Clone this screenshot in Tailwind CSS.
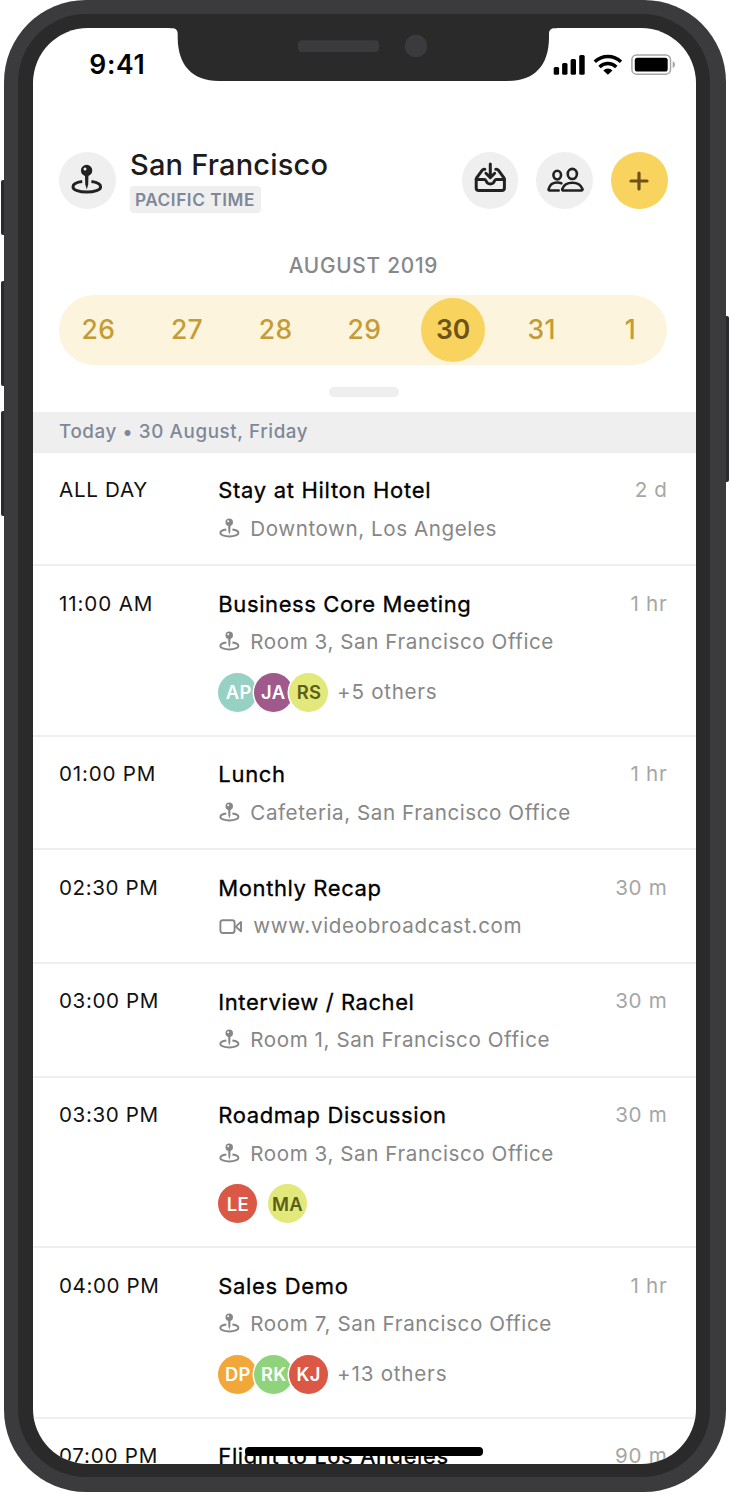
<!DOCTYPE html>
<html lang="en">
<head>
<meta charset="utf-8">
<meta name="viewport" content="width=device-width, initial-scale=1">
<title>Calendar – San Francisco</title>
<script src="https://cdn.jsdelivr.net/npm/@tailwindcss/browser@4"></script>
</head>
<body class="bg-white font-[Inter,'Liberation_Sans',sans-serif] antialiased">

<!-- Shared icons -->
<svg class="hidden" aria-hidden="true">
  <symbol id="pin" viewBox="0 0 32 32">
    <path d="M11.200 17.500C5.600 18.200 2 20.300 2 22.900c0 2.900 6.200 5.200 13.800 5.200s13.800-2.300 13.800-5.200c0-2.600-3.600-4.700-9.200-5.400" fill="none" stroke="currentColor" stroke-width="3"/>
    <path d="M13.900 10h3.600l-.3 10.500-1.400 5-1.500-5z" fill="currentColor"/>
    <path fill-rule="evenodd" d="M15.600.8a5.700 5.700 0 1 1 0 11.400 5.700 5.700 0 0 1 0-11.400zM14 3.400a1.500 1.500 0 1 0 0 3 1.500 1.500 0 0 0 0-3z" fill="currentColor"/>
  </symbol>
  <symbol id="video" viewBox="0 0 24 20">
    <g fill="none" stroke="currentColor" stroke-width="1.900" stroke-linejoin="round">
      <rect x="1.400" y="4.200" width="14.200" height="12.800" rx="2.400"/>
      <path d="M16.800 10.600l5.200-4.700v9.400z"/>
    </g>
  </symbol>
</svg>

<div class="relative w-[732px] h-[1494px] overflow-hidden">
  <!-- Hardware buttons -->
  <div class="absolute left-[0.500px] top-[180px] w-[6px] h-[55px] rounded-l-[2px] bg-[#2b2b2b]"></div>
  <div class="absolute left-[0.500px] top-[281px] w-[6px] h-[105px] rounded-l-[2px] bg-[#2b2b2b]"></div>
  <div class="absolute left-[0.500px] top-[411px] w-[6px] h-[105px] rounded-l-[2px] bg-[#2b2b2b]"></div>
  <div class="absolute left-[723px] top-[316px] w-[6.400px] h-[166px] rounded-r-[2px] bg-[#2b2b2b]"></div>

  <!-- Frame -->
  <div class="relative ml-[4.300px] w-[721.400px] h-[1492.400px] rounded-[82px] bg-[#3b3b3d] pl-[14px] pr-[15.700px] pt-[14px] pb-[15.400px]">
    <div class="h-full rounded-[68px] bg-[#2a2a2a] pl-[14.500px] pr-[14px] pt-[14px] pb-[13px]">
      <main class="h-full rounded-[55px] bg-white overflow-hidden flex flex-col">

        <!-- Status bar -->
        <div class="flex-none h-[119.500px] pt-[22px] pl-[56.500px] pr-[20px] flex items-start justify-between text-black">
          <span class="text-[26.500px] leading-[29px] font-semibold tracking-[0.700px]">9:41</span>
          <svg class="w-[124px] h-[24px] mt-[2px]" viewBox="552 52 124 24">
            <rect x="553.700" y="67" width="5.400" height="7.700" rx="1.500"/>
            <rect x="562.100" y="63" width="5.400" height="11.700" rx="1.500"/>
            <rect x="570.600" y="59" width="5.400" height="15.700" rx="1.500"/>
            <rect x="579.200" y="55" width="5.500" height="19.700" rx="1.500"/>
            <g fill="none" stroke="#000" stroke-width="3.400">
              <path d="M594.800 61.700a19 19 0 0 1 26.200 0"/>
              <path d="M599.500 67a12 12 0 0 1 16.800 0"/>
            </g>
            <path d="M607.900 74.700l-4.600-4.300a6.800 6.800 0 0 1 9.200 0z"/>
            <rect x="631.900" y="54.900" width="38.600" height="19.300" rx="4.800" fill="none" stroke="#a6a6a6" stroke-width="1.500"/>
            <rect x="634.800" y="57.700" width="32.900" height="13.900" rx="2.600"/>
            <path d="M672.700 61.200c3 1 3 5.900 0 6.900z" fill="#a6a6a6"/>
          </svg>
        </div>

        <!-- Header -->
        <header class="flex-none h-[66px] pl-[26.200px] pr-[28.500px] flex items-start">
          <div class="mt-[4.500px] size-[56.600px] rounded-full bg-[#efefef] text-[#222] flex items-center justify-center">
            <svg class="size-[32px] -mt-[0.500px]"><use href="#pin"/></svg>
          </div>
          <div class="ml-[14.400px] flex flex-col items-start">
            <h1 class="text-[29px] leading-[34px] font-medium tracking-[0.200px] text-[#1c1c1c]">San Francisco</h1>
            <span class="mt-[4.500px] h-[27px] rounded-[4px] bg-[#efefef] pl-[5px] pr-[6px] text-[17.200px] leading-[27px] font-semibold tracking-[0.560px] text-[#7f8898]">PACIFIC TIME</span>
          </div>
          <div class="ml-auto mt-[4.500px] flex gap-[18px]">
            <button class="size-[56.600px] rounded-full bg-[#efefef] text-[#222] flex items-center justify-center">
              <svg class="size-[32px] -mt-[5px]" viewBox="0 0 32 32" fill="none" stroke="currentColor" stroke-width="3" stroke-linecap="round" stroke-linejoin="round">
                <path d="M10.800 7.200H10.200Q9 7.200 8.300 8.200L2.800 15.600Q2.200 16.400 2.200 17.400V26a2.600 2.600 0 0 0 2.600 2.600H27.800a2.600 2.600 0 0 0 2.600-2.600V17.400Q30.400 16.400 29.800 15.600L24.300 8.200Q23.600 7.200 22.400 7.200H21.800"/>
                <path d="M2.200 17.600H10.600c1 0 1.300.8 1.800 1.900.7 1.600 2 2.400 3.900 2.400s3.200-.8 3.900-2.400c.5-1.100.8-1.900 1.800-1.900h8.400"/>
                <path d="M16.300 2V15.200M11.900 11.300l4.400 4.300 4.400-4.300"/>
              </svg>
            </button>
            <button class="size-[56.600px] rounded-full bg-[#efefef] text-[#222] flex items-center justify-center">
              <svg class="w-[37px] h-[29.200px] ml-[1px] -mt-[1px]" viewBox="0 0 38 30" fill="none" stroke="currentColor" stroke-width="2.700" stroke-linecap="round" stroke-linejoin="round">
                <ellipse cx="10.500" cy="10.400" rx="3.900" ry="4.500"/>
                <ellipse cx="26" cy="9.200" rx="4.700" ry="5.200"/>
                <path d="M12 26.200H2.800c-1 0-1.400-.7-1.100-1.600C2.700 20.800 6 18 10.700 18c1.500 0 2.900.3 4 .7"/>
                <path d="M17 26.200H35.200c1 0 1.500-.7 1.200-1.600C35 21 31.200 18.300 26.100 18.300S17 21 15.700 24.600c-.3.900.3 1.600 1.300 1.600z"/>
              </svg>
            </button>
            <button class="size-[56.600px] rounded-full bg-[#f8d35e] text-[#6f5217] flex items-center justify-center">
              <svg class="size-[20px] mt-[1.500px]" viewBox="0 0 20 20" fill="none" stroke="currentColor" stroke-width="3.200" stroke-linecap="round"><path d="M10 2v16M2 10h16"/></svg>
            </button>
          </div>
        </header>

        <!-- Week picker -->
        <h2 class="flex-none mt-[38px] pr-[2px] text-center text-[20.800px] leading-[28px] font-medium tracking-[0.750px] text-[#888]">AUGUST 2019</h2>
        <div class="flex-none mt-[15px] ml-[26.200px] mr-[28.800px] h-[70.600px] rounded-full bg-[#fcf4dc]">
          <div class="-ml-[5px] -mr-[7.600px] h-full grid grid-cols-7 items-center justify-items-center text-[26.500px] font-medium tracking-[0.400px] text-[#c49c35]">
            <span>26</span><span>27</span><span>28</span><span>29</span>
            <span class="size-[64px] rounded-full bg-[#f8d35e] text-[#6f5217] font-semibold tracking-[-0.200px] flex items-center justify-center">30</span>
            <span>31</span><span>1</span>
          </div>
        </div>
        <div class="flex-none mt-[21.700px] ml-[295.800px] w-[70.500px] h-[10.700px] rounded-full bg-[#efefef]"></div>

        <!-- Agenda -->
        <div class="flex-none mt-[14.300px] h-[40.800px] px-[26.200px] bg-[#efefef] flex items-center text-[18.800px] font-medium tracking-[0.610px] text-[#7f8898]">Today • 30 August, Friday</div>

        <ul class="flex-none text-[20.600px] leading-[30px]">
          <li class="h-[113.700px] pl-[26.200px] pr-[28.500px] pt-[22.500px] border-b-2 border-[#efefef] flex items-start">
            <time class="-mt-[0.500px] w-[159.300px] tracking-[0.700px] text-[#111]">ALL DAY</time>
            <div class="flex-1">
              <h3 class="text-[22px] [-webkit-text-stroke:0.300px_#000] tracking-[0.690px] text-black">Stay at Hilton Hotel</h3>
              <p class="mt-[8.500px] pl-[1px] flex items-center text-[#878787] tracking-[0.570px]"><svg class="size-[21px] mr-[10px] -mt-[1px]"><use href="#pin"/></svg>Downtown, Los Angeles</p>
            </div>
            <span class="-mt-[0.500px] tracking-[0.600px] text-[#a6a6a6]">2 d</span>
          </li>

          <li class="h-[170.500px] pl-[26.200px] pr-[28.500px] pt-[22.500px] border-b-2 border-[#efefef] flex items-start">
            <time class="-mt-[0.200px] w-[159.300px] tracking-[0.880px] text-[#111]">11:00 AM</time>
            <div class="flex-1">
              <h3 class="text-[22px] [-webkit-text-stroke:0.300px_#000] tracking-[0.610px] text-black">Business Core Meeting</h3>
              <p class="mt-[8.500px] pl-[1px] flex items-center text-[#878787] tracking-[0.570px]"><svg class="size-[21px] mr-[10px] -mt-[1px]"><use href="#pin"/></svg>Room 3, San Francisco Office</p>
              <div class="mt-[15.300px] flex items-center text-[18.400px] font-semibold tracking-[0.300px] text-white">
                <span class="size-[39px] rounded-full bg-[#96d1c4] flex items-center justify-center pl-[2px]">AP</span>
                <span class="-ml-[3.600px] size-[39px] rounded-full bg-[#9f5a8b] ring-[1.500px] ring-white flex items-center justify-center">JA</span>
                <span class="-ml-[3.600px] size-[39px] rounded-full bg-[#e2e879] text-[#5b5f18] ring-[1.500px] ring-white flex items-center justify-center pl-[1px]">RS</span>
                <span class="ml-[9px] text-[20.600px] font-normal tracking-[0.720px] text-[#878787]">+5 others</span>
              </div>
            </div>
            <span class="-mt-[0.200px] tracking-[0.750px] text-[#a6a6a6]">1 hr</span>
          </li>

          <li class="h-[113.700px] pl-[26.200px] pr-[28.500px] pt-[22.500px] border-b-2 border-[#efefef] flex items-start">
            <time class="-mt-[0.500px] w-[159.300px] tracking-[0.780px] text-[#111]">01:00 PM</time>
            <div class="flex-1">
              <h3 class="text-[22px] [-webkit-text-stroke:0.300px_#000] tracking-[0.700px] text-black">Lunch</h3>
              <p class="mt-[8.500px] pl-[1px] flex items-center text-[#878787] tracking-[0.570px]"><svg class="size-[21px] mr-[10px] -mt-[1px]"><use href="#pin"/></svg>Cafeteria, San Francisco Office</p>
            </div>
            <span class="-mt-[0.500px] tracking-[0.750px] text-[#a6a6a6]">1 hr</span>
          </li>

          <li class="h-[113.700px] pl-[26.200px] pr-[28.500px] pt-[22.500px] border-b-2 border-[#efefef] flex items-start">
            <time class="-mt-[0.200px] w-[159.300px] tracking-[0.600px] text-[#111]">02:30 PM</time>
            <div class="flex-1">
              <h3 class="text-[22px] [-webkit-text-stroke:0.300px_#000] tracking-[0.600px] text-black">Monthly Recap</h3>
              <p class="mt-[8.500px] pl-[1px] flex items-center text-[#878787] tracking-[0.660px]"><svg class="w-[24px] h-[20px] mr-[10px]"><use href="#video"/></svg>www.videobroadcast.com</p>
            </div>
            <span class="-mt-[0.200px] tracking-[0.700px] text-[#a6a6a6]">30 m</span>
          </li>

          <li class="h-[113.700px] pl-[26.200px] pr-[28.500px] pt-[22.500px] border-b-2 border-[#efefef] flex items-start">
            <time class="-mt-[0.500px] w-[159.300px] tracking-[0.600px] text-[#111]">03:00 PM</time>
            <div class="flex-1">
              <h3 class="text-[22px] [-webkit-text-stroke:0.300px_#000] tracking-[0.570px] text-black">Interview / Rachel</h3>
              <p class="mt-[8.500px] pl-[1px] flex items-center text-[#878787] tracking-[0.570px]"><svg class="size-[21px] mr-[10px] -mt-[1px]"><use href="#pin"/></svg>Room 1, San Francisco Office</p>
            </div>
            <span class="-mt-[0.500px] tracking-[0.700px] text-[#a6a6a6]">30 m</span>
          </li>

          <li class="h-[170.500px] pl-[26.200px] pr-[28.500px] pt-[22.500px] border-b-2 border-[#efefef] flex items-start">
            <time class="-mt-[0.500px] w-[159.300px] tracking-[0.600px] text-[#111]">03:30 PM</time>
            <div class="flex-1">
              <h3 class="text-[22px] [-webkit-text-stroke:0.300px_#000] tracking-[0.600px] text-black">Roadmap Discussion</h3>
              <p class="mt-[8.500px] pl-[1px] flex items-center text-[#878787] tracking-[0.570px]"><svg class="size-[21px] mr-[10px] -mt-[1px]"><use href="#pin"/></svg>Room 3, San Francisco Office</p>
              <div class="mt-[15.300px] flex items-center gap-[10.700px] text-[18.400px] font-semibold tracking-[0.300px] text-white">
                <span class="size-[39px] rounded-full bg-[#da5845] flex items-center justify-center">LE</span>
                <span class="size-[39px] rounded-full bg-[#e2e879] text-[#5b5f18] flex items-center justify-center">MA</span>
              </div>
            </div>
            <span class="-mt-[0.500px] tracking-[0.700px] text-[#a6a6a6]">30 m</span>
          </li>

          <li class="h-[170.500px] pl-[26.200px] pr-[28.500px] pt-[22.500px] border-b-2 border-[#efefef] flex items-start">
            <time class="-mt-[0.200px] w-[159.300px] tracking-[0.600px] text-[#111]">04:00 PM</time>
            <div class="flex-1">
              <h3 class="text-[22px] [-webkit-text-stroke:0.300px_#000] tracking-[0.680px] text-black">Sales Demo</h3>
              <p class="mt-[8.500px] pl-[1px] flex items-center text-[#878787] tracking-[0.610px]"><svg class="size-[21px] mr-[10px] -mt-[1px]"><use href="#pin"/></svg>Room 7, San Francisco Office</p>
              <div class="mt-[15.300px] flex items-center text-[18.400px] font-semibold tracking-[0.300px] text-white">
                <span class="size-[39px] rounded-full bg-[#f2a73b] flex items-center justify-center">DP</span>
                <span class="-ml-[3.600px] size-[39px] rounded-full bg-[#8fd47d] ring-[1.500px] ring-white flex items-center justify-center pl-[1px]">RK</span>
                <span class="-ml-[3.600px] size-[39px] rounded-full bg-[#da5845] ring-[1.500px] ring-white flex items-center justify-center">KJ</span>
                <span class="ml-[9px] text-[20.600px] font-normal tracking-[0.780px] text-[#878787]">+13 others</span>
              </div>
            </div>
            <span class="-mt-[0.200px] tracking-[0.750px] text-[#a6a6a6]">1 hr</span>
          </li>

          <li class="h-[113.700px] pl-[26.200px] pr-[28.500px] pt-[22.500px] flex items-start">
            <time class="-mt-[0.500px] w-[159.300px] tracking-[0.750px] text-[#111]">07:00 PM</time>
            <div class="flex-1">
              <h3 class="text-[22px] [-webkit-text-stroke:0.300px_#000] tracking-[0.610px] text-black">Flight to Los Angeles</h3>
            </div>
            <span class="-mt-[0.500px] tracking-[0.700px] text-[#a6a6a6]">90 m</span>
          </li>
        </ul>
      </main>
    </div>
  </div>

  <!-- Notch -->
  <svg class="absolute left-[166px] top-[26px] w-[396px] h-[56px]" viewBox="166 26 396 56">
    <path d="M170 26V28.200H171.500C176 28.200 177.700 30 177.700 34V38C178 65 192 80.900 219 80.900H508C535 80.900 548.700 65 549 38V34C549 30 550.700 28.200 555.200 28.200H557V26z" fill="#2a2a2a"/>
    <rect x="298" y="40.300" width="81" height="11.700" rx="4" fill="#3b3b3d"/>
    <circle cx="416" cy="46" r="11.200" fill="#3b3b3d"/>
  </svg>

  <!-- Home indicator -->
  <div class="absolute left-[245.300px] top-[1447px] w-[237.400px] h-[8.600px] rounded-[4px] bg-black"></div>
</div>
</body>
</html>
